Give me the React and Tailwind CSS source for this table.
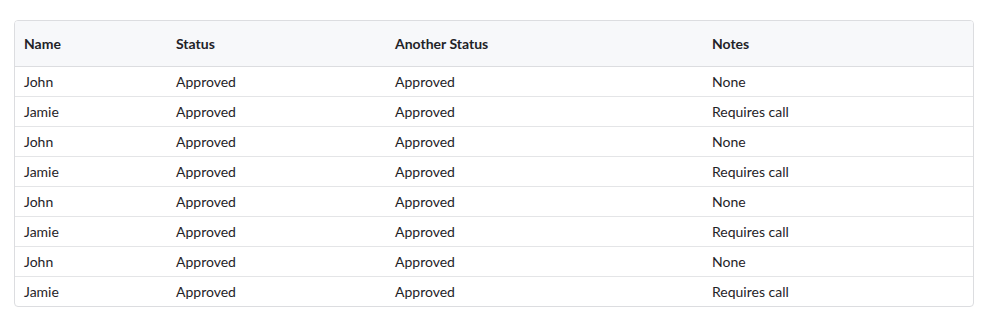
import React from "react";

const rows = [
  { name: "John", status: "Approved", another: "Approved", notes: "None" },
  { name: "Jamie", status: "Approved", another: "Approved", notes: "Requires call" },
  { name: "John", status: "Approved", another: "Approved", notes: "None" },
  { name: "Jamie", status: "Approved", another: "Approved", notes: "Requires call" },
  { name: "John", status: "Approved", another: "Approved", notes: "None" },
  { name: "Jamie", status: "Approved", another: "Approved", notes: "Requires call" },
  { name: "John", status: "Approved", another: "Approved", notes: "None" },
  { name: "Jamie", status: "Approved", another: "Approved", notes: "Requires call" },
];

const App = () => {
  return (
    <div className="bg-white min-h-screen pt-5 pl-[14px] pr-[10px] font-['Lato','Liberation_Sans',sans-serif] text-[#1f2328]">
      <div className="w-[960px] border border-[#dcdde0] rounded-[4px] overflow-hidden">
        <table className="w-full border-collapse table-fixed text-[14px]">
          <colgroup>
            <col className="w-[152px]" />
            <col className="w-[219px]" />
            <col className="w-[317px]" />
            <col />
          </colgroup>
          <thead>
            <tr className="bg-[#f7f8fa] h-[45px] border-b border-[#dcdde0]">
              <th className="text-left font-bold pl-[9px]">Name</th>
              <th className="text-left font-bold pl-[9px]">Status</th>
              <th className="text-left font-bold pl-[9px]">Another Status</th>
              <th className="text-left font-bold pl-[9px]">Notes</th>
            </tr>
          </thead>
          <tbody>
            {rows.map((row, i) => (
              <tr
                key={i}
                className={`h-[30px] ${i < rows.length - 1 ? "border-b border-[#e4e5e7]" : ""}`}
              >
                <td className="pl-[9px]">{row.name}</td>
                <td className="pl-[9px]">{row.status}</td>
                <td className="pl-[9px]">{row.another}</td>
                <td className="pl-[9px]">{row.notes}</td>
              </tr>
            ))}
          </tbody>
        </table>
      </div>
    </div>
  );
};

export default App;
